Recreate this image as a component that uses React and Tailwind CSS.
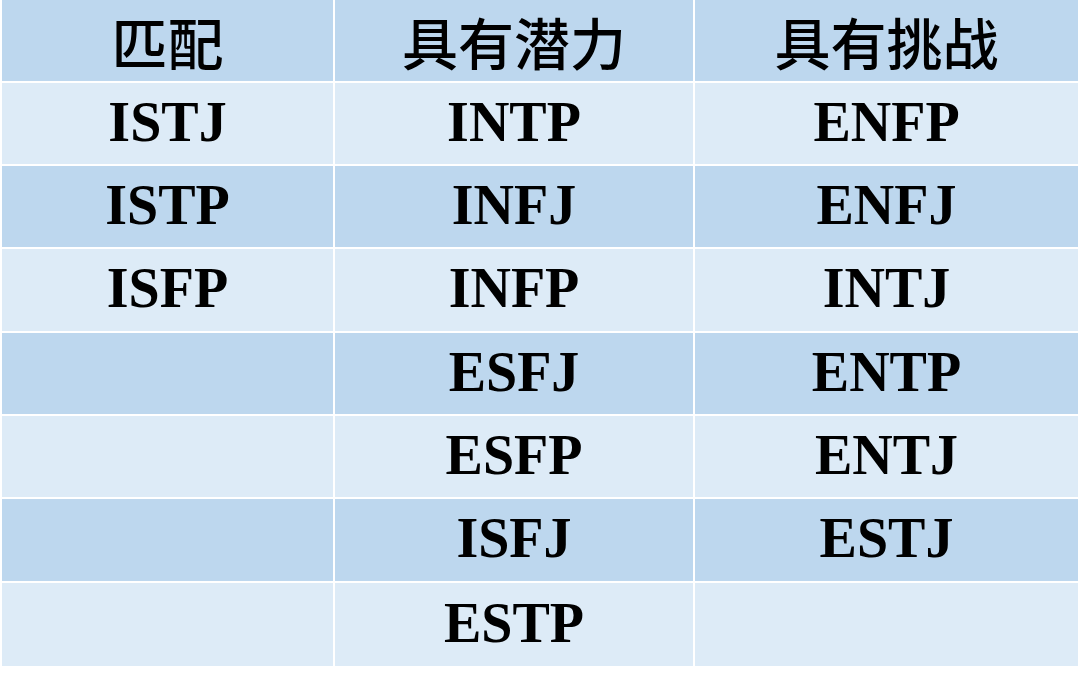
const rows = [
  ["ISTJ", "INTP", "ENFP"],
  ["ISTP", "INFJ", "ENFJ"],
  ["ISFP", "INFP", "INTJ"],
  ["", "ESFJ", "ENTP"],
  ["", "ESFP", "ENTJ"],
  ["", "ISFJ", "ESTJ"],
  ["", "ESTP", ""],
];

const heights = ["h-[81px]", "h-[81px]", "h-[82px]", "h-[81px]", "h-[81px]", "h-[82px]", "h-[83px]"];

const App = () => {
  return (
    <div className="w-[1080px] h-[673px] bg-white overflow-hidden pl-[2px]">
      <div className="grid grid-cols-[331px_358px_383px] gap-[2px] font-['Liberation_Serif','Noto_Sans_CJK_SC',serif] font-bold text-black">
        {["匹配", "具有潜力", "具有挑战"].map((h) => (
          <div
            key={h}
            className="h-[81px] bg-[#bdd7ee] flex items-center justify-center text-[56px] leading-none font-['Noto_Sans_CJK_SC',serif] font-medium"
          >
            {h}
          </div>
        ))}
        {rows.map((r, i) =>
          r.map((c, j) => (
            <div
              key={i + "-" + j}
              className={`${heights[i]} ${i % 2 === 0 ? "bg-[#ddebf7]" : "bg-[#bdd7ee]"} flex items-center justify-center text-[56px] leading-none pb-[4px]`}
            >
              {c}
            </div>
          ))
        )}
      </div>
    </div>
  );
};

export default App;
